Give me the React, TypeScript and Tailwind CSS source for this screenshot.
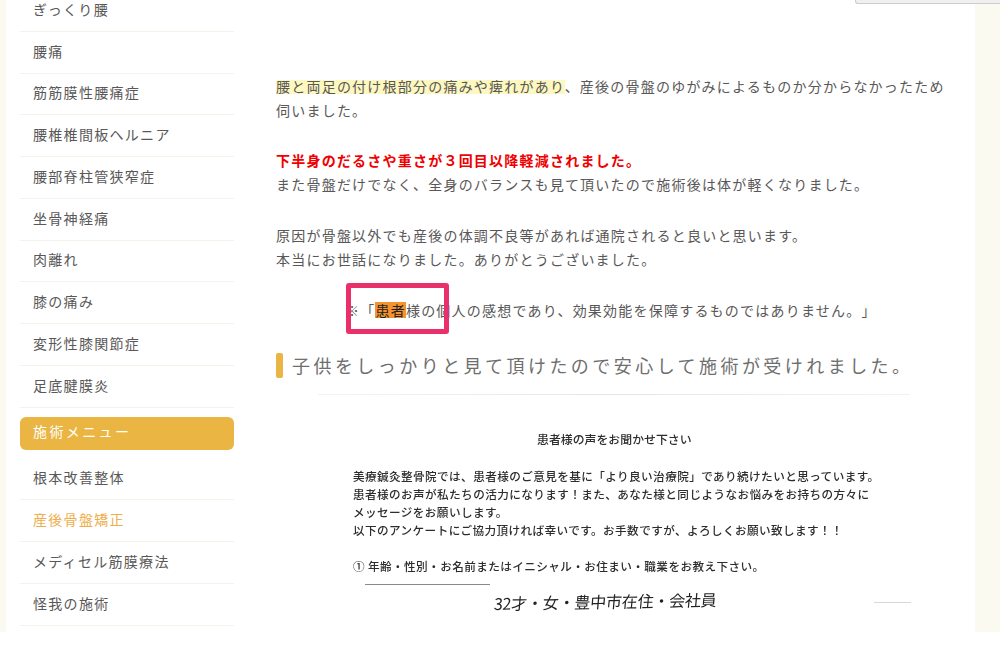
import React from "react";

const menuTop = ["ぎっくり腰", "腰痛", "筋筋膜性腰痛症", "腰椎椎間板ヘルニア", "腰部脊柱管狭窄症", "坐骨神経痛", "肉離れ", "膝の痛み", "変形性膝関節症", "足底腱膜炎"];
const menuBottom = ["根本改善整体", "産後骨盤矯正", "メディセル筋膜療法", "怪我の施術"];

function MenuRow({ label, active }: { label: string; active?: boolean }) {
  return (
    <li className={`h-[41.75px] flex items-center pl-[13px] pb-[2px] border-b border-[#f5f2ea] tracking-[1.3px] text-[14px] ${active ? "text-[#eeae4c]" : "text-[#595757]"}`}>
      {label}
    </li>
  );
}

export default function App() {
  return (
    <div className="relative h-[650px] w-[1000px] overflow-hidden bg-white [text-spacing-trim:space-all] font-['Noto_Sans_CJK_JP','Noto_Sans',sans-serif]">
      <div className="flex h-[632px] bg-[#fbfaf0] pl-[6px] pr-[25px]">
        <div className="flex flex-1 bg-white overflow-hidden">
          {/* Sidebar */}
          <aside className="w-[228px] pl-[14px] shrink-0 -mt-[10px]">
            <ul>
              {menuTop.map((m) => (
                <MenuRow key={m} label={m} />
              ))}
            </ul>
            <div className="mt-[9px] h-[33px] flex items-center pl-[13px] pb-[3px] rounded-[6px] bg-[#eab543] text-white text-[14px] tracking-[2.4px]">
              施術メニュー
            </div>
            <ul className="mt-[9px]">
              {menuBottom.map((m, i) => (
                <MenuRow key={m} label={m} active={i === 1} />
              ))}
            </ul>
          </aside>

          {/* Main */}
          <main className="flex-1 pl-[42px] pr-[30px] pt-[74px] text-[14px] leading-[24px] tracking-[1.22px] text-[#595757]">
            <p className="whitespace-nowrap">
              <span className="bg-[linear-gradient(transparent_18%,#fdf7c0_18%,#fdf7c0_88%,transparent_88%)]">腰と両足の付け根部分の痛みや痺れがあり</span>、産後の骨盤のゆがみによるものか分からなかったため
            </p>
            <p>伺いました。</p>

            <p className="mt-[26px] font-bold text-[#f00000]">下半身のだるさや重さが３回目以降軽減されました。</p>
            <p>また骨盤だけでなく、全身のバランスも見て頂いたので施術後は体が軽くなりました。</p>

            <p className="mt-[27px]">原因が骨盤以外でも産後の体調不良等があれば通院されると良いと思います。</p>
            <p>本当にお世話になりました。ありがとうございました。</p>

            <p className="mt-[27px] pl-[69px] whitespace-nowrap">
              ※「<span className="text-[#222] bg-[linear-gradient(transparent_12%,#f7932e_12%,#f7932e_88%,transparent_88%)]">患者</span>様の個人の感想であり、効果効能を保障するものではありません。」
            </p>

            <h2 className="mt-[30px] flex items-center gap-[9px] h-[26px] text-[18px] tracking-[3.45px] text-[#6e6e6e] whitespace-nowrap">
              <span className="w-[7px] h-[25px] rounded-[2px] bg-[#eab543] shrink-0"></span>
              子供をしっかりと見て頂けたので安心して施術が受けれました。
            </h2>

            {/* Scanned questionnaire */}
            <div className="mt-[16px] text-[#2d2d2d] tracking-normal">
              <div className="ml-[42px] w-[592px] h-[1px] bg-gradient-to-r from-[#f4f4f4] via-[#e6e6e6] to-[#f2f2f2]"></div>
              <div className="pl-[77px] text-[11.6px] leading-[18px] tracking-[0.42px] font-medium blur-[0.3px] whitespace-nowrap">
                <p className="mt-[35px] pl-[184px] text-[11.9px] tracking-normal">患者様の声をお聞かせ下さい</p>
                <div className="mt-[19px]">
                  <p>美療鍼灸整骨院では、患者様のご意見を基に「より良い治療院」であり続けたいと思っています。</p>
                  <p>患者様のお声が私たちの活力になります！また、あなた様と同じようなお悩みをお持ちの方々に</p>
                  <p>メッセージをお願いします。</p>
                  <p>以下のアンケートにご協力頂ければ幸いです。お手数ですが、よろしくお願い致します！！</p>
                </div>
                <p className="mt-[18px]">① 年齢・性別・お名前またはイニシャル・お住まい・職業をお教え下さい。</p>
                <div className="ml-[12px] mt-[9px] w-[125px] h-[1px] bg-[#8a8a8a]"></div>
                <div className="flex items-start">
                  <p className="ml-[141px] mt-[6px] text-[16px] leading-[20px] tracking-[-0.2px] font-normal text-[#222] -skew-x-6 -rotate-1">32才・女・豊中市在住・会社員</p>
                  <div className="ml-[157px] mt-[17px] w-[37px] h-[1px] bg-[#d8d8d8]"></div>
                </div>
              </div>
            </div>
          </main>
        </div>
      </div>

      {/* Pink highlight box over the text */}
      <div className="absolute left-[346px] top-[283px] w-[103px] h-[51px] rounded-[3px] border-[5px] border-[#e9306a]"></div>

      {/* Edge of a floating element at the top */}
      <div className="absolute left-[855px] top-0 w-[145px] h-[4px] bg-[#f0f0f0] border-b border-l border-[#cccccc] rounded-bl-[3px]"></div>
    </div>
  );
}
